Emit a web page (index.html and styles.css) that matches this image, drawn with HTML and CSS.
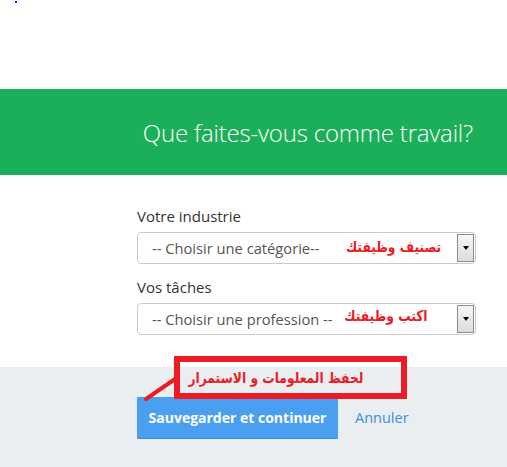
FILE: index.html
```html
<!DOCTYPE html>
<html lang="fr">
<head>
    <meta charset="UTF-8">
    <meta name="viewport" content="width=device-width, initial-scale=1.0">
    <title>Que faites-vous comme travail?</title>
    <link rel="stylesheet" href="styles.css">
</head>
<body>
    <div class="top">
        <span class="dot"></span>
    </div>

    <header class="banner">
        <h1>Que faites-vous comme travail?</h1>
    </header>

    <main class="form">
        <label class="field-label">Votre industrie</label>
        <div class="select">
            <span class="select-text">-- Choisir une catégorie--</span>
            <span class="note note-one" dir="rtl">تصنيف وظيفتك</span>
            <span class="select-btn"><span class="caret"></span></span>
        </div>

        <label class="field-label">Vos tâches</label>
        <div class="select">
            <span class="select-text">-- Choisir une profession --</span>
            <span class="note note-two" dir="rtl">اكتب وظيفتك</span>
            <span class="select-btn"><span class="caret"></span></span>
        </div>
    </main>

    <footer class="actions">
        <button class="save-button">Sauvegarder et continuer</button>
        <a href="#" class="cancel-link">Annuler</a>

        <div class="callout"><span class="callout-text" dir="rtl">لحفظ المعلومات و الاستمرار</span></div>
        <svg class="pointer" width="40" height="30" viewBox="0 0 40 30">
            <line x1="4" y1="26" x2="36" y2="4" stroke="#ed1c24" stroke-width="4" stroke-linecap="round"/>
        </svg>
    </footer>
</body>
</html>
```

FILE: styles.css
```css
body {
    font-family: "Open Sans", sans-serif;
    margin: 0;
    background-color: #fff;
    min-height: 467px;
    display: flex;
    flex-direction: column;
}

.top {
    height: 89px;
    position: relative;
}

.dot {
    position: absolute;
    left: 15px;
    top: 1px;
    width: 2px;
    height: 2px;
    background-color: #2020ff;
}

.banner {
    background-color: #1caf5a;
    height: 86px;
    display: flex;
    align-items: center;
    justify-content: flex-end;
    padding-right: 34px;
}

.banner h1 {
    margin: 0;
    color: #fff;
    font-size: 24px;
    font-weight: 300;
    letter-spacing: -0.2px;
}

.form {
    padding: 31px 0 32px 137px;
    display: flex;
    flex-direction: column;
}

.field-label {
    font-size: 15px;
    line-height: 20px;
    color: #333;
    margin-bottom: 6px;
}

.select {
    position: relative;
    width: 337px;
    height: 30px;
    border: 1px solid #ccc;
    border-radius: 4px;
    margin-bottom: 13px;
    display: flex;
    align-items: center;
}

.select:last-child {
    margin-bottom: 0;
}

.select-text {
    padding-left: 14px;
    font-size: 14.7px;
    color: #555;
}

.select-btn {
    position: absolute;
    right: 1px;
    top: 1px;
    width: 15px;
    height: 26px;
    border: 1px solid #8c8c8c;
    background: linear-gradient(#f6f6f6, #dcdcdc);
    display: flex;
    align-items: center;
    justify-content: center;
}

.caret {
    width: 0;
    height: 0;
    border-left: 3.5px solid transparent;
    border-right: 3.5px solid transparent;
    border-top: 4px solid #000;
}

.note {
    position: absolute;
    font-family: "DejaVu Sans", sans-serif;
    font-weight: bold;
    font-size: 15px;
    color: #ed1c24;
    white-space: nowrap;
    transform: scaleX(0.82);
    transform-origin: right center;
}

.note-one {
    right: 34px;
    top: 5px;
}

.note-two {
    right: 47px;
    top: 3px;
}

.actions {
    flex: 1;
    position: relative;
    background-color: #ebeef1;
    padding: 30px 0 0 137px;
    display: flex;
    align-items: flex-start;
}

.save-button {
    background-color: #4a9ff0;
    color: #fff;
    font-family: "Open Sans", sans-serif;
    font-weight: bold;
    font-size: 14px;
    width: 201px;
    height: 42px;
    border: none;
    border-bottom: 1px solid #3f8fdd;
    border-radius: 1px;
    cursor: pointer;
}

.cancel-link {
    margin-left: 17px;
    line-height: 42px;
    font-size: 14.5px;
    color: #3a8ee6;
    text-decoration: none;
}

.callout {
    position: absolute;
    left: 174px;
    top: -11px;
    width: 183px;
    height: 31px;
    border: 6px solid #ed1c24;
    display: flex;
    justify-content: flex-end;
    align-items: center;
    padding-right: 38px;
    box-sizing: content-box;
}

.callout-text {
    display: inline-block;
    font-family: "DejaVu Sans", sans-serif;
    font-weight: bold;
    font-size: 15px;
    line-height: 20px;
    color: #ed1c24;
    white-space: nowrap;
    transform: scaleX(0.82);
    transform-origin: right center;
}

.pointer {
    position: absolute;
    left: 142px;
    top: 6px;
}
```
